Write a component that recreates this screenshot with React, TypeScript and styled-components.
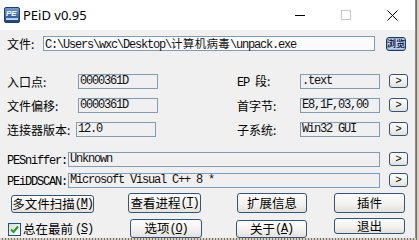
import styled, { createGlobalStyle } from "styled-components";

const GlobalStyle = createGlobalStyle`
  html, body {
    margin: 0;
    padding: 0;
  }
  body {
    width: 419px;
    height: 240px;
    overflow: hidden;
    background: repeating-linear-gradient(90deg, #d3cdc3 0 2px, #7a7064 2px 3px);
    font-family: "Noto Sans CJK SC", sans-serif;
  }
`;

const Window = styled.div`
  width: 415px;
  height: 238px;
  border-right: 1px solid #8c8c8c;
  background: #f0f0f0;
  display: flex;
  flex-direction: column;
  overflow: hidden;
`;

const TitleBar = styled.div`
  height: 30px;
  flex-shrink: 0;
  background: #fff;
  display: flex;
  align-items: center;
`;

const AppIcon = styled.svg`
  width: 16px;
  height: 16px;
  margin-left: 4px;
`;

const Title = styled.span`
  margin-left: 3px;
  font-family: "Noto Sans", "Open Sans", sans-serif;
  font-size: 13px;
  color: #000;
  flex: 1;
`;

const CaptionButton = styled.div`
  width: 46px;
  height: 30px;
  display: flex;
  align-items: center;
  justify-content: center;
`;

const Body = styled.div`
  padding: 6px 0 0 7px;
  display: flex;
  flex-direction: column;
`;

const Row = styled.div`
  display: flex;
  align-items: center;
`;

const Label = styled.span<{ $w: number }>`
  width: ${(p) => p.$w}px;
  flex-shrink: 0;
  font-size: 12px;
  line-height: 15px;
  color: #000;
  white-space: nowrap;
`;

const Mono = styled.span`
  font-family: "Liberation Mono", monospace;
  font-size: 12px;
  letter-spacing: -1.2px;
`;

const Cjk = styled.span`
  font-family: "Noto Sans CJK SC", sans-serif;
  font-size: 11.5px;
  letter-spacing: 0.3px;
  line-height: 13px;
`;

const Field = styled.div<{ $w: number; $white?: boolean; $dx?: number }>`
  width: ${(p) => p.$w}px;
  height: 15px;
  margin-left: ${(p) => p.$dx ?? 0}px;
  box-sizing: border-box;
  flex-shrink: 0;
  border: 1px solid #7f9db9;
  background: ${(p) => (p.$white ? "#fbfbfb" : "#f0f0f0")};
  font-family: "Liberation Mono", "Noto Sans CJK SC", monospace;
  font-size: 12px;
  letter-spacing: -1.2px;
  line-height: 13px;
  padding-left: 1px;
  white-space: nowrap;
  color: #111;
`;

const InfoGrid = styled.div`
  margin-top: 23px;
  display: grid;
  grid-template-columns: 71px 80px 79px 63px 80px 28px;
  grid-auto-rows: 15px;
  row-gap: 9px;
  align-items: center;
`;

const PeGrid = styled.div`
  margin-top: 15px;
  display: grid;
  grid-template-columns: 61px 312px 28px;
  grid-auto-rows: 15px;
  row-gap: 6px;
  align-items: center;
`;

const ArrowButton = styled.button`
  justify-self: end;
  width: 19px;
  height: 14px;
  margin-top: -1px;
  box-sizing: border-box;
  padding: 0;
  border: 1px solid #34547e;
  border-radius: 3px;
  background: linear-gradient(#fefefe, #f0efea 60%, #e1e0da);
  font-family: "Liberation Mono", monospace;
  font-size: 11px;
  line-height: 12px;
  color: #000;
`;

const BrowseButton = styled.button`
  width: 20px;
  height: 14px;
  margin-left: 11px;
  box-sizing: border-box;
  padding: 0;
  border: 1px solid #1b3b6e;
  border-radius: 3px;
  background: linear-gradient(#d9e6f7, #b5cbea);
  box-shadow: inset 0 0 0 1px #8fb0e0;
  font-family: "Noto Sans CJK SC", sans-serif;
  font-size: 9px;
  font-weight: 700;
  line-height: 12px;
  white-space: nowrap;
  display: flex;
  align-items: center;
  justify-content: center;
  color: #10213f;
`;

const ButtonGrid = styled.div`
  margin-top: 5px;
  display: grid;
  grid-template-columns: 121px 108px 98px 71px;
  grid-template-rows: 25px 20px;
  align-items: start;
`;

const Button = styled.button<{ $w: number; $h: number; $dx?: number; $dy?: number }>`
  width: ${(p) => p.$w}px;
  height: ${(p) => p.$h}px;
  margin-left: ${(p) => p.$dx ?? 0}px;
  margin-top: ${(p) => p.$dy ?? 0}px;
  box-sizing: border-box;
  padding: 0;
  border: 1px solid #34547e;
  border-radius: 3px;
  background: linear-gradient(#fefefe, #f1f0ec 60%, #e2e1db);
  font-family: "Noto Sans CJK SC", sans-serif;
  font-size: 12.5px;
  line-height: 1;
  color: #000;
  display: flex;
  align-items: center;
  justify-content: center;
  white-space: nowrap;
`;

const CheckRow = styled.label`
  display: flex;
  align-items: center;
  gap: 2px;
  height: 14px;
  margin: 4px 0 0 1px;
  font-size: 12.5px;
  line-height: 14px;
  color: #000;
  white-space: nowrap;
`;

const CheckBox = styled.span`
  width: 13px;
  height: 13px;
  flex-shrink: 0;
  box-sizing: border-box;
  border: 1px solid #1c5180;
  background: linear-gradient(135deg, #dcdcd7, #fff);
  display: flex;
  align-items: center;
  justify-content: center;
`;

const Acc = ({ k }: { k: string }) => (
  <Mono>
    (<u>{k}</u>)
  </Mono>
);

export default function App() {
  return (
    <>
      <GlobalStyle />
      <Window>
        <TitleBar>
          <AppIcon viewBox="0 0 16 16">
            <defs>
              <linearGradient id="ig" x1="0" y1="0" x2="0" y2="1">
                <stop offset="0" stopColor="#6f9fd8" />
                <stop offset="1" stopColor="#1d3f77" />
              </linearGradient>
            </defs>
            <rect x="0.5" y="0.5" width="15" height="15" rx="1.5" fill="url(#ig)" stroke="#23406c" />
            <text x="2" y="9" fontSize="8" fontStyle="italic" fontWeight="bold" fill="#fff" fontFamily="Liberation Sans">
              PE
            </text>
            <rect x="2" y="11" width="12" height="2" fill="#b8d2f2" />
          </AppIcon>
          <Title>PEiD v0.95</Title>
          <CaptionButton>
            <svg width="10" height="10" viewBox="0 0 10 10">
              <line x1="0" y1="5.5" x2="10" y2="5.5" stroke="#000" />
            </svg>
          </CaptionButton>
          <CaptionButton>
            <svg width="10" height="10" viewBox="0 0 10 10">
              <rect x="0.5" y="0.5" width="9" height="9" fill="none" stroke="#c8c8c8" />
            </svg>
          </CaptionButton>
          <CaptionButton>
            <svg width="11" height="11" viewBox="0 0 11 11">
              <path d="M0.5 0.5 L10.5 10.5 M10.5 0.5 L0.5 10.5" stroke="#000" />
            </svg>
          </CaptionButton>
        </TitleBar>

        <Body>
          <Row>
            <Label $w={36}>文件:</Label>
            <Field $w={332} $white>
              C:\Users\wxc\Desktop\<Cjk>计算机病毒</Cjk>\unpack.exe
            </Field>
            <BrowseButton>浏览</BrowseButton>
          </Row>

          <InfoGrid>
            <Label $w={71}>入口点:</Label>
            <Field $w={80}>0000361D</Field>
            <span />
            <Label $w={63}>
              <Mono>EP </Mono>段:
            </Label>
            <Field $w={80}>.text</Field>
            <ArrowButton>&gt;</ArrowButton>

            <Label $w={71}>文件偏移:</Label>
            <Field $w={80}>0000361D</Field>
            <span />
            <Label $w={63}>首字节:</Label>
            <Field $w={80}>E8,1F,03,00</Field>
            <ArrowButton>&gt;</ArrowButton>

            <Label $w={71}>连接器版本:</Label>
            <Field $w={80} $dx={-2}>12.0</Field>
            <span />
            <Label $w={63}>子系统:</Label>
            <Field $w={80}>Win32 GUI</Field>
            <ArrowButton>&gt;</ArrowButton>
          </InfoGrid>

          <PeGrid>
            <Label $w={61}>
              <Mono>PESniffer:</Mono>
            </Label>
            <Field $w={312}>Unknown</Field>
            <ArrowButton>&gt;</ArrowButton>

            <Label $w={61}>
              <Mono>PEiDDSCAN:</Mono>
            </Label>
            <Field $w={312}>Microsoft Visual C++ 8 *</Field>
            <ArrowButton>&gt;</ArrowButton>
          </PeGrid>

          <ButtonGrid>
            <Button $w={83} $h={18} $dx={4} $dy={2}>
              多文件扫描<Acc k="M" />
            </Button>
            <Button $w={73} $h={20}>
              查看进程<Acc k="T" />
            </Button>
            <Button $w={70} $h={20} $dx={1}>
              扩展信息
            </Button>
            <Button $w={71} $h={20}>
              插件
            </Button>

            <CheckRow>
              <CheckBox>
                <svg width="9" height="9" viewBox="0 0 9 9">
                  <path d="M1 4.5 L3.5 7 L8 1.5" fill="none" stroke="#21a121" strokeWidth="2" />
                </svg>
              </CheckBox>
              总在最前<Acc k="S" />
            </CheckRow>
            <Button $w={72} $h={19} $dx={2} $dy={1}>
              选项<Acc k="O" />
            </Button>
            <Button $w={71} $h={18} $dy={2}>
              关于<Acc k="A" />
            </Button>
            <Button $w={71} $h={16}>
              退出
            </Button>
          </ButtonGrid>
        </Body>
      </Window>
    </>
  );
}
